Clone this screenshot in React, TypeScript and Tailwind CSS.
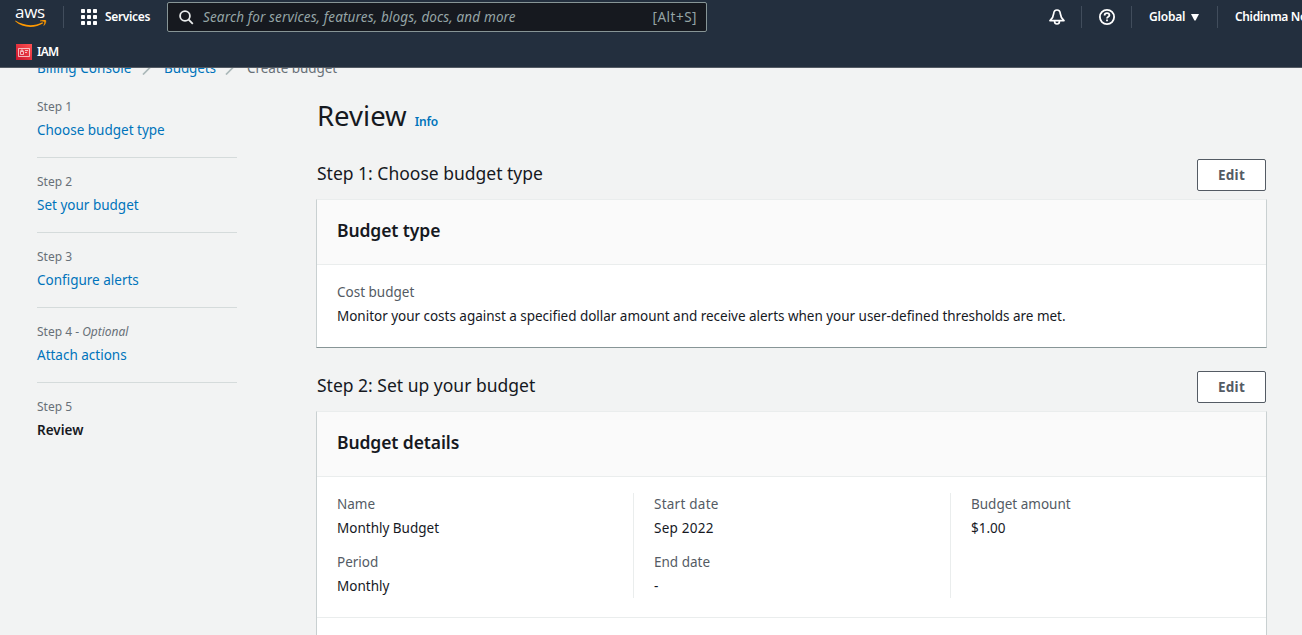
import React from "react";

const steps = [
  { n: "Step 1", label: "Choose budget type" },
  { n: "Step 2", label: "Set your budget" },
  { n: "Step 3", label: "Configure alerts" },
  { n: "Step 4", optional: true, label: "Attach actions" },
  { n: "Step 5", label: "Review", current: true },
];

function Logo() {
  return (
    <div className="relative ml-[15px] h-[22px] w-[32px] shrink-0">
      <span className="absolute left-0 top-[-4px] font-['Open_Sans',sans-serif] text-[17px] font-medium leading-[20px] tracking-[-0.3px] text-white">aws</span>
      <svg className="absolute left-0 top-[14px]" width="32" height="9" viewBox="0 0 32 9" fill="none">
        <path d="M0.4 0.6C8 5.8 19 6.8 27.4 2.2L28.2 3.2C20 8.6 7.5 8.2 0.2 1.2Z" fill="#ff9900" />
        <path d="M25 0.9C27.5 0 30.3 -0.1 30.8 0.5C31.3 1.4 30.4 4.3 28.8 5.6C29.3 3.9 29.8 2.2 29.4 1.7C28.9 1.1 27 1.3 25 0.9Z" fill="#ff9900" stroke="#ff9900" strokeWidth="0.4" />
      </svg>
    </div>
  );
}

function Header() {
  return (
    <header className="h-[68px] shrink-0 overflow-hidden border-b border-[#545b64] bg-[#232f3e] text-white">
      <div className="flex h-[34px] w-[1400px] items-center">
        <Logo />
        <div className="ml-4 h-[22px] w-px bg-[#414d5c]" />
        <svg className="ml-[17px]" width="16" height="16" viewBox="0 0 16 16" fill="#fff">
          {[0, 6, 12].map((y) => [0, 6, 12].map((x) => <rect key={`${x}-${y}`} x={x} y={y} width="4" height="4" rx="0.8" />))}
        </svg>
        <span className="ml-2 w-[62px] whitespace-nowrap text-[12px] font-semibold tracking-[-0.35px]">Services</span>
        <div className="-mt-px flex h-[30px] w-[540px] items-center rounded-[2px] border border-[#879596] bg-[#16191f] text-[13.5px] text-[#95a5a6]">
          <svg className="ml-[11px] mt-px" width="15" height="15" viewBox="0 0 15 15" fill="none" stroke="#eaeded" strokeWidth="1.8">
            <circle cx="6" cy="6" r="4.9" />
            <path d="M9.4 9.4L13.8 13.8" />
          </svg>
          <span className="ml-[9px] mt-[2px] whitespace-nowrap italic tracking-[0.14px]">Search for services, features, blogs, docs, and more</span>
          <span className="ml-auto mr-[9px] mt-[2px] tracking-[0.5px]">[Alt+S]</span>
        </div>
        <svg className="ml-[342px]" width="16" height="16" viewBox="0 0 16 16" fill="none" stroke="#fff" strokeWidth="1.7" strokeLinejoin="round">
          <path d="M8 1C6.3 1 4.9 2.4 4.7 4.6C4.5 7.2 3.6 9.2 1 11.6H15C12.4 9.2 11.5 7.2 11.3 4.6C11.1 2.4 9.7 1 8 1Z" />
          <path d="M5.6 11.8V12.6C5.6 14.1 6.6 15 8 15S10.4 14.1 10.4 12.6V11.8" />
        </svg>
        <div className="ml-4 h-[22px] w-px bg-[#414d5c]" />
        <svg className="ml-[17px]" width="16" height="16" viewBox="0 0 16 16" fill="none" stroke="#fff" strokeWidth="1.8">
          <circle cx="8" cy="8" r="7.1" />
          <path d="M5.6 6.4C5.6 5 6.5 4.1 8 4.1S10.4 5 10.4 6.2C10.4 7.8 8 7.6 8 9.5M8 10.6V12.3" />
        </svg>
        <div className="ml-4 h-[22px] w-px bg-[#414d5c]" />
        <span className="ml-[17px] w-[42px] whitespace-nowrap text-[12px] font-semibold tracking-[-0.2px]">Global</span>
        <svg width="8" height="7" viewBox="0 0 8 7" fill="#fff"><path d="M0 0H8L4.6 6.5H3.4Z" /></svg>
        <div className="ml-[18px] h-[22px] w-px bg-[#414d5c]" />
        <span className="ml-[17px] whitespace-nowrap text-[12px] font-semibold tracking-[-0.35px]">Chidinma Nor</span>
      </div>
      <div className="flex h-[34px] items-center pl-4 pt-px">
        <svg width="16" height="16" viewBox="0 0 16 16" fill="none">
          <defs><linearGradient id="iam" x1="0" y1="16" x2="16" y2="0" gradientUnits="userSpaceOnUse"><stop stopColor="#c8142c" /><stop offset="1" stopColor="#ff5252" /></linearGradient></defs>
          <rect width="16" height="16" fill="url(#iam)" />
          <path d="M2.5 4.5H13.5V12.5H2.5ZM4.5 7.5H7.5V10.5H4.5ZM5 7.2V6H6.8V7.2M9 6.5H12M9 8.5H11" stroke="#fff" strokeOpacity="0.75" strokeWidth="0.9" />
        </svg>
        <span className="ml-[5px] text-[12px] font-semibold tracking-[-0.8px]">IAM</span>
      </div>
    </header>
  );
}

function Slash() {
  return (
    <svg className="mx-[10px] shrink-0" width="12" height="14" viewBox="0 0 12 14"><path d="M1 13.5L11 3.5" stroke="#aab7b8" strokeWidth="1.7" /></svg>
  );
}

function SectionHead({ children }: { children: React.ReactNode }) {
  return (
    <div className="flex h-[32px] justify-between pr-px">
      <h2 className="ml-px text-[17.5px] leading-[29px]">{children}</h2>
      <button className="h-[32px] w-[69px] rounded-[2px] border border-[#545b64] bg-white text-[13.5px] font-bold leading-[30px] tracking-[0.3px] text-[#545b64]">Edit</button>
    </div>
  );
}

function Card({ title, children, className }: { title: string; children: React.ReactNode; className: string }) {
  return (
    <section className={`mt-[8px] border border-t-[#eaeded] border-x-[#c9d0d1] border-b-[#879596] bg-white ${className}`}>
      <div className="h-[65px] border-b border-[#eaeded] bg-[#fafafa] pl-5 text-[17.5px] font-semibold leading-[60px] tracking-[-0.1px]">{title}</div>
      {children}
    </section>
  );
}

function Field({ k, v, wide }: { k: string; v: string; wide?: boolean }) {
  return (
    <div className={`h-[58px] leading-[24px] ${wide ? "tracking-[0.25px]" : ""}`}>
      <div className="text-[#545b64]">{k}</div>
      <div>{v}</div>
    </div>
  );
}

export default function App() {
  return (
    <div className="flex h-[635px] w-[1302px] flex-col overflow-hidden bg-[#f2f3f3] font-['Noto_Sans',sans-serif] text-[13.5px] text-[#16191f]">
      <Header />
      <div className="min-h-0 flex-1 overflow-hidden">
        <nav className="-mt-[10px] flex h-[20px] items-center pl-[37px] leading-[20px] text-[#0073bb]">
          <span className="w-[95px] whitespace-nowrap tracking-[0.05px]">Billing Console</span><Slash /><span className="w-[51px] tracking-[-0.1px]">Budgets</span><Slash /><span className="tracking-[-0.05px] text-[#687078]">Create budget</span>
        </nav>
        <div className="flex">
          <aside className="ml-[37px] mt-[18px] w-[200px]">
            {steps.map((s) => (
              <div key={s.n} className={`mb-[13px] h-[62px] ${s.current ? "" : "border-b border-[#d5dbdb]"}`}>
                <div className="text-[12px] leading-[22px] text-[#687078]">{s.n}{s.optional && <span> - <i>Optional</i></span>}</div>
                <div className={`mt-[2px] leading-[20px] ${s.current ? "font-semibold" : "text-[#0073bb]"}`}>{s.label}</div>
              </div>
            ))}
          </aside>
          <main className="ml-[79px] w-[951px] pt-[17px]">
            <h1 className="ml-px flex h-[43px] items-baseline text-[27.5px] leading-[41px]">Review<span className="ml-2 text-[12px] font-semibold tracking-[-0.2px] text-[#0073bb]">Info</span></h1>
            <div className="h-[21px]" />
            <SectionHead>Step 1: Choose budget type</SectionHead>
            <Card title="Budget type" className="h-[149px]">
              <div className="pl-5 pt-[15px] leading-[24px]">
                <div className="text-[#545b64]">Cost budget</div>
                <div className="tracking-[-0.025px]">Monitor your costs against a specified dollar amount and receive alerts when your user-defined thresholds are met.</div>
              </div>
            </Card>
            <div className="h-[23px]" />
            <SectionHead>Step 2: Set up your budget</SectionHead>
            <Card title="Budget details" className="h-[400px]">
              <div className="flex h-[141px] border-b border-[#eaeded] pl-5 pt-[16px]">
                <div className="h-[105px] w-[297px] border-r border-[#eaeded]"><div className="-mt-px"><Field k="Name" v="Monthly Budget" /><Field k="Period" v="Monthly" /></div></div>
                <div className="h-[105px] w-[317px] border-r border-[#eaeded] pl-5"><div className="-mt-px"><Field k="Start date" v="Sep 2022" wide /><Field k="End date" v="-" /></div></div>
                <div className="-mt-px pl-5"><Field k="Budget amount" v="$1.00" /></div>
              </div>
            </Card>
          </main>
        </div>
      </div>
    </div>
  );
}
